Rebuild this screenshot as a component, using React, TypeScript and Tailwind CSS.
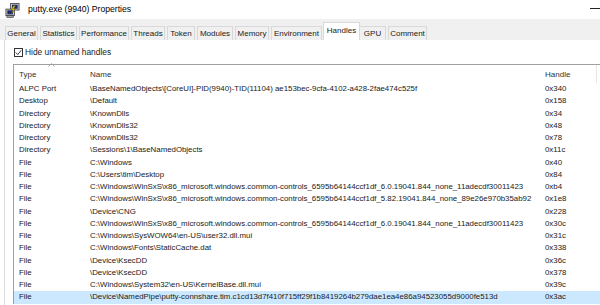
const tabs = [
  { label: "General", w: 33 },
  { label: "Statistics", w: 37 },
  { label: "Performance", w: 50 },
  { label: "Threads", w: 34 },
  { label: "Token", w: 28 },
  { label: "Modules", w: 36 },
  { label: "Memory", w: 34 },
  { label: "Environment", w: 51 },
  { label: "Handles", w: 37, active: true },
  { label: "GPU", w: 27 },
  { label: "Comment", w: 39 },
];

const rows = [
  ["ALPC Port", "\\BaseNamedObjects\\[CoreUI]-PID(9940)-TID(11104) ae153bec-9cfa-4102-a428-2fae474c525f", "0x340"],
  ["Desktop", "\\Default", "0x158"],
  ["Directory", "\\KnownDlls", "0x34"],
  ["Directory", "\\KnownDlls32", "0x48"],
  ["Directory", "\\KnownDlls32", "0x78"],
  ["Directory", "\\Sessions\\1\\BaseNamedObjects", "0x11c"],
  ["File", "C:\\Windows", "0x40"],
  ["File", "C:\\Users\\tim\\Desktop", "0x84"],
  ["File", "C:\\Windows\\WinSxS\\x86_microsoft.windows.common-controls_6595b64144ccf1df_6.0.19041.844_none_11adecdf30011423", "0xb4"],
  ["File", "C:\\Windows\\WinSxS\\x86_microsoft.windows.common-controls_6595b64144ccf1df_5.82.19041.844_none_89e26e970b35ab92", "0x1e8"],
  ["File", "\\Device\\CNG", "0x228"],
  ["File", "C:\\Windows\\WinSxS\\x86_microsoft.windows.common-controls_6595b64144ccf1df_6.0.19041.844_none_11adecdf30011423", "0x30c"],
  ["File", "C:\\Windows\\SysWOW64\\en-US\\user32.dll.mui", "0x31c"],
  ["File", "C:\\Windows\\Fonts\\StaticCache.dat", "0x338"],
  ["File", "\\Device\\KsecDD", "0x36c"],
  ["File", "\\Device\\KsecDD", "0x378"],
  ["File", "C:\\Windows\\System32\\en-US\\KernelBase.dll.mui", "0x39c"],
  ["File", "\\Device\\NamedPipe\\putty-connshare.tim.c1cd13d7f410f715ff29f1b8419264b279dae1ea4e86a94523055d9000fe513d", "0x3ac"],
];

function PuttyIcon() {
  return (
    <svg width="15" height="15" viewBox="0 0 16 16">
      <rect x="6" y="0.5" width="9" height="7" fill="#c8c8c8" stroke="#333" strokeWidth="0.8" />
      <rect x="7.5" y="1.8" width="6" height="4.3" fill="#1a2a6a" />
      <rect x="1" y="6.5" width="9" height="7" fill="#c8c8c8" stroke="#333" strokeWidth="0.8" />
      <rect x="2.5" y="7.8" width="6" height="4.3" fill="#1a2a6a" />
      <rect x="2" y="13.5" width="7" height="2" fill="#a0a0a0" stroke="#333" strokeWidth="0.6" />
      <path d="M9 3 L7 7.5 L9 7.5 L6.5 12 L11 6.5 L9 6.5 L11 3 Z" fill="#f2d31b" stroke="#6b5a00" strokeWidth="0.5" />
    </svg>
  );
}

export default function App() {
  return (
    <div
      className="w-[600px] h-[305px] overflow-hidden bg-white text-[8px] text-[#1a1a1a]"
      style={{ fontFamily: '"Liberation Sans", Arial, sans-serif' }}
    >
      <div className="h-[19px] flex items-center bg-white">
        <div className="ml-[5px] mt-[1px]">
          <PuttyIcon />
        </div>
        <span className="ml-[8px] text-[8.6px] text-black">putty.exe (9940) Properties</span>
        <div className="ml-auto w-[10px] h-px bg-[#222] mb-[3px]" />
      </div>

      <div className="h-[21px] bg-[#f0f0f0] flex items-end pl-[5px]">
        {tabs.map((t) =>
          t.active ? (
            <div
              key={t.label}
              style={{ width: t.w }}
              className="h-[18px] -mx-px relative z-10 bg-white border border-b-0 border-[#d9d9d9] flex items-start pt-[2px] justify-center shrink-0"
            >
              {t.label}
            </div>
          ) : (
            <div
              key={t.label}
              style={{ width: t.w }}
              className="h-[14px] mr-[2px] bg-[#f0f0f0] border border-b-0 border-[#d9d9d9] flex items-center justify-center shrink-0"
            >
              {t.label}
            </div>
          )
        )}
      </div>

      <div className="bg-white border-l border-[#d9d9d9] ml-[4px] h-[265px]">
        <div className="h-[24px] flex items-center pl-[9px]">
          <div className="w-[9px] h-[9px] border border-[#333] flex items-center justify-center bg-white">
            <svg width="7" height="7" viewBox="0 0 7 7">
              <path d="M0.8 3.6 L2.7 5.6 L6.3 1.2" fill="none" stroke="#222" strokeWidth="0.9" />
            </svg>
          </div>
          <span className="ml-[2px] text-[8.4px]">Hide unnamed handles</span>
        </div>

        <div className="ml-[8px] border-t border-l border-[#a0a0a0] text-[7.85px]">
          <div className="h-[18px] flex items-center relative text-[#333] text-[8px]">
            <div className="w-[76px] pl-[5px] pt-[2px] relative">
              Type
              <svg className="absolute left-[34px] -top-[4px]" width="7" height="4" viewBox="0 0 7 4">
                <path d="M0.5 3.5 L3.5 0.5 L6.5 3.5" fill="none" stroke="#a0a0a0" strokeWidth="0.8" />
              </svg>
            </div>
            <div className="w-[454px] pt-[2px]">Name</div>
            <div className="w-[53px] pl-[1px] pt-[2px] border-r border-[#e5e5e5] h-full flex items-center">Handle</div>
          </div>
          {rows.map((r, i) => (
            <div
              key={i}
              className={`h-[12.25px] flex items-center whitespace-nowrap ${
                i === rows.length - 1 ? "bg-[#cce8ff]" : ""
              }`}
            >
              <div className="w-[76px] pl-[5px] shrink-0">{r[0]}</div>
              <div className="w-[454px] shrink-0 overflow-hidden">{r[1]}</div>
              <div className="w-[53px] pl-[1px] shrink-0">{r[2]}</div>
            </div>
          ))}
        </div>
      </div>
    </div>
  );
}
